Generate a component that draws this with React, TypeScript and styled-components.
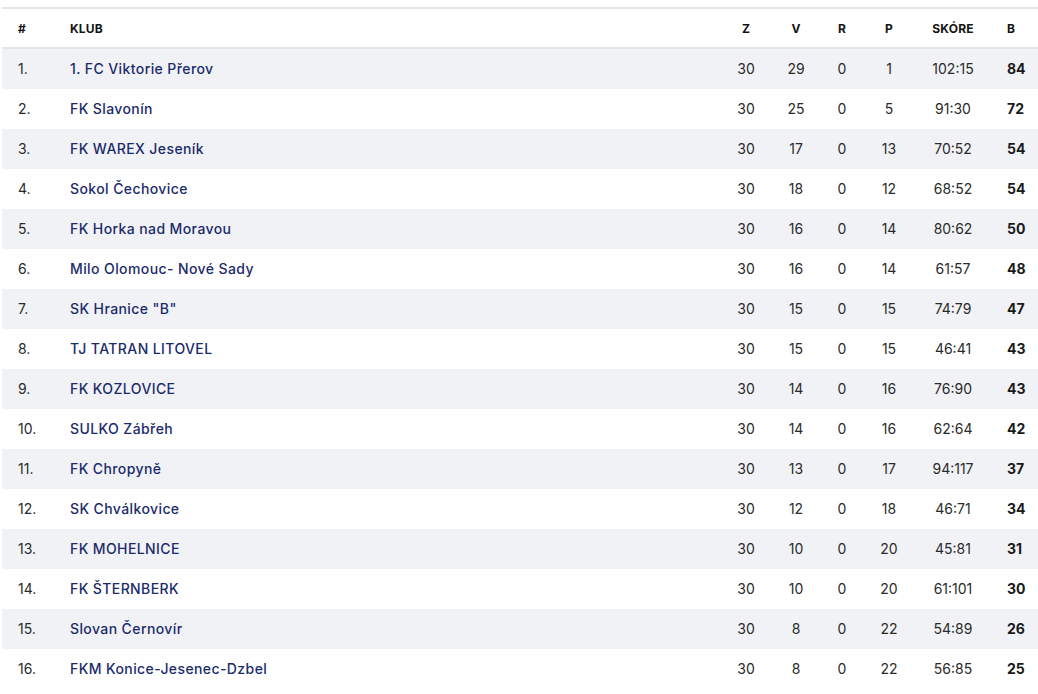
import React from "react";
import styled, { createGlobalStyle } from "styled-components";

const Global = createGlobalStyle`
  html, body { margin: 0; padding: 0; background: #ffffff; }
  body { font-family: Inter, "Noto Sans", "Liberation Sans", sans-serif; }
`;

const Page = styled.div`
  padding: 7px 0 0 2px;
`;

const Table = styled.div`
  border-top: 2px solid #e3e5e9;
  width: 1036px;
`;

const cols = "52px 1fr 50px 50px 42px 52px 76px 47px";

const HeadRow = styled.div`
  display: grid;
  grid-template-columns: ${cols};
  height: 38px;
  align-items: center;
  border-bottom: 2px solid #e3e5e9;
`;

const Row = styled.div<{ $striped: boolean }>`
  display: grid;
  grid-template-columns: ${cols};
  height: 40px;
  box-sizing: border-box;
  padding-bottom: 2px;
  align-items: center;
  background: ${(p) => (p.$striped ? "#f1f2f6" : "#ffffff")};
`;

const Th = styled.div<{ $align?: "left" | "center" }>`
  font-size: 12px;
  font-weight: 700;
  color: #141414;
  text-transform: uppercase;
  letter-spacing: 0.2px;
  text-align: ${(p) => p.$align ?? "center"};
  padding-left: ${(p) => (p.$align === "left" ? "16px" : "0")};
`;

const Rank = styled.div`
  font-size: 14px;
  color: #2a2a2a;
  padding-left: 16px;
`;

const Club = styled.div`
  font-size: 14px;
  font-weight: 500;
  letter-spacing: 0.4px;
  color: #1b2b6c;
  padding-left: 16px;
  white-space: nowrap;
`;

const Num = styled.div`
  font-size: 14px;
  color: #2a2a2a;
  text-align: center;
`;

const Points = styled.div`
  font-size: 14px;
  font-weight: 700;
  color: #1a1a1a;
  padding-left: 16px;
`;

type Team = [string, number, number, number, number, string, number];

const teams: Team[] = [
  ["1. FC Viktorie Přerov", 30, 29, 0, 1, "102:15", 84],
  ["FK Slavonín", 30, 25, 0, 5, "91:30", 72],
  ["FK WAREX Jeseník", 30, 17, 0, 13, "70:52", 54],
  ["Sokol Čechovice", 30, 18, 0, 12, "68:52", 54],
  ["FK Horka nad Moravou", 30, 16, 0, 14, "80:62", 50],
  ["Milo Olomouc- Nové Sady", 30, 16, 0, 14, "61:57", 48],
  ["SK Hranice \"B\"", 30, 15, 0, 15, "74:79", 47],
  ["TJ TATRAN LITOVEL", 30, 15, 0, 15, "46:41", 43],
  ["FK KOZLOVICE", 30, 14, 0, 16, "76:90", 43],
  ["SULKO Zábřeh", 30, 14, 0, 16, "62:64", 42],
  ["FK Chropyně", 30, 13, 0, 17, "94:117", 37],
  ["SK Chválkovice", 30, 12, 0, 18, "46:71", 34],
  ["FK MOHELNICE", 30, 10, 0, 20, "45:81", 31],
  ["FK ŠTERNBERK", 30, 10, 0, 20, "61:101", 30],
  ["Slovan Černovír", 30, 8, 0, 22, "54:89", 26],
  ["FKM Konice-Jesenec-Dzbel", 30, 8, 0, 22, "56:85", 25],
];

export default function App() {
  return (
    <>
      <Global />
      <Page>
        <Table>
          <HeadRow>
            <Th $align="left">#</Th>
            <Th $align="left">Klub</Th>
            <Th>Z</Th>
            <Th>V</Th>
            <Th>R</Th>
            <Th>P</Th>
            <Th>Skóre</Th>
            <Th $align="left">B</Th>
          </HeadRow>
          {teams.map((t, i) => (
            <Row key={t[0]} $striped={i % 2 === 0}>
              <Rank>{i + 1}.</Rank>
              <Club>{t[0]}</Club>
              <Num>{t[1]}</Num>
              <Num>{t[2]}</Num>
              <Num>{t[3]}</Num>
              <Num>{t[4]}</Num>
              <Num>{t[5]}</Num>
              <Points>{t[6]}</Points>
            </Row>
          ))}
        </Table>
      </Page>
    </>
  );
}
